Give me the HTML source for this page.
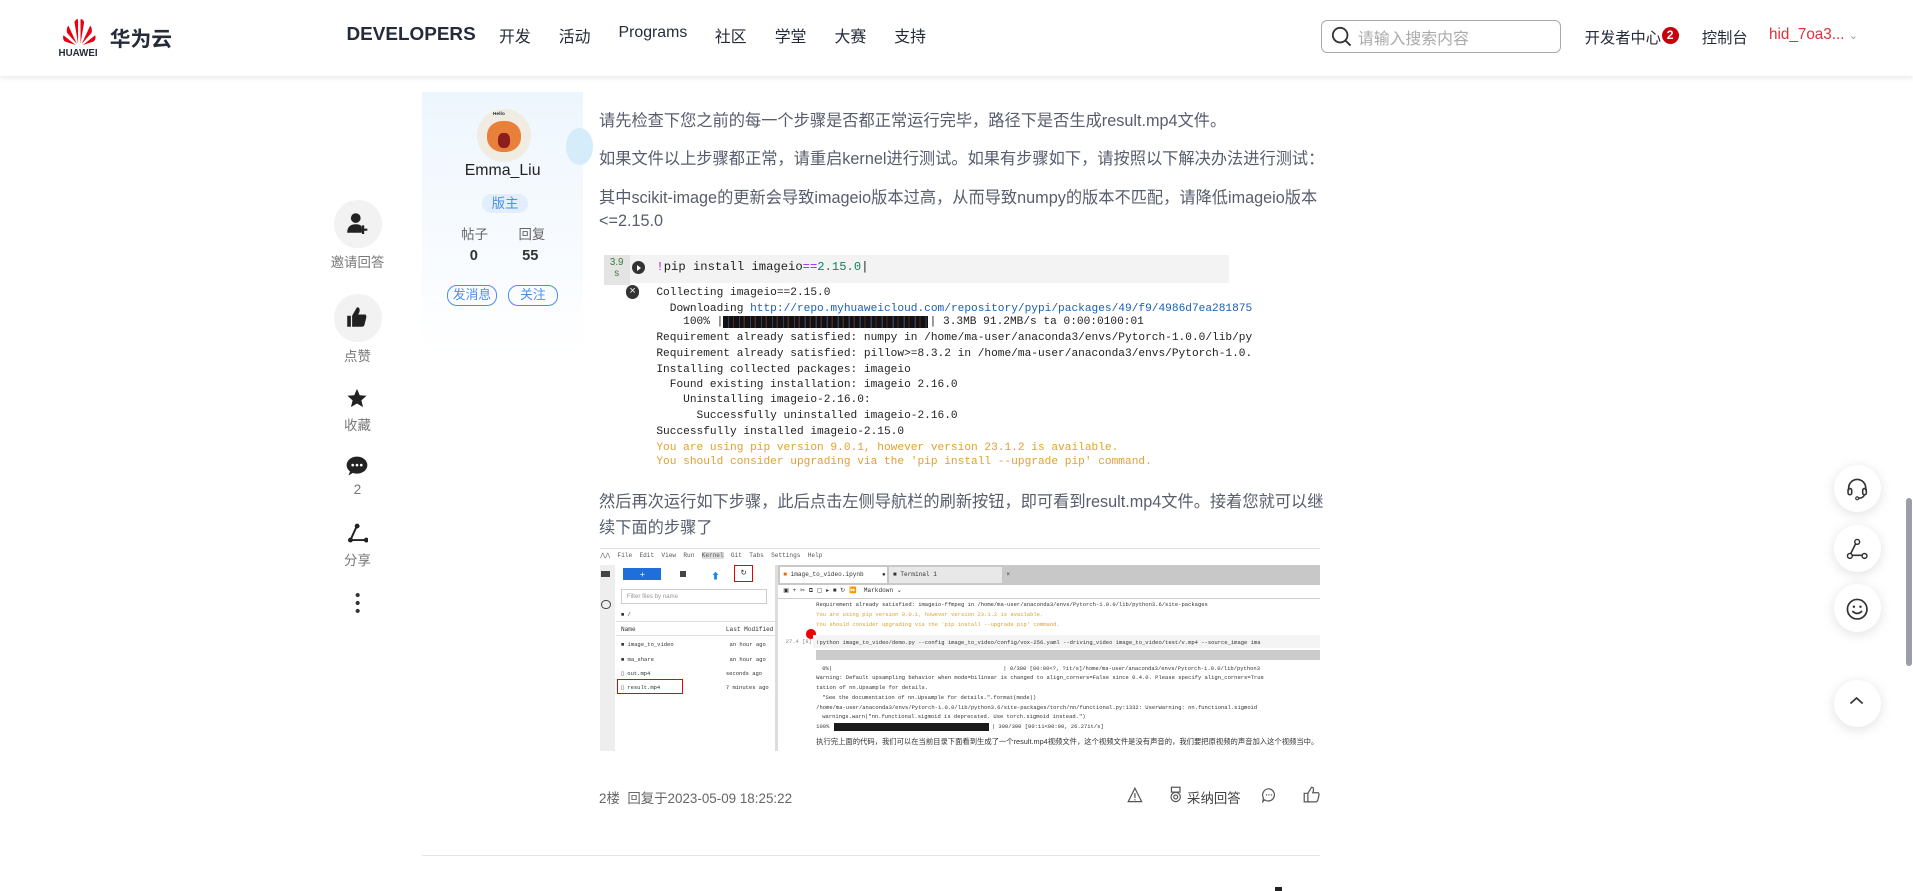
<!DOCTYPE html>
<html><head><meta charset="utf-8">
<style>
html,body{margin:0;padding:0;overflow:hidden;background:#fff}
body{width:1568px;height:730px;zoom:1.22;position:relative;font-family:"Liberation Sans","Noto Sans CJK SC",sans-serif;color:#252b3a}
.a{position:absolute;white-space:nowrap}
.hdr{position:absolute;left:0;top:0;width:1568px;height:62px;background:#fff;box-shadow:0 2px 4px rgba(0,0,0,.08)}
.nav{font-size:13px;color:#252b3a;top:20px}
.rail{text-align:center;width:60px;left:263px;font-size:11px;color:#777}
.circ{position:absolute;left:274px;width:39px;height:39px;border-radius:50%;background:#f2f2f2}
.txt{font-size:13.3px;color:#575d6c;left:491px}
.mono{font-family:"Liberation Mono","DejaVu Sans Mono",monospace;font-size:9.15px;color:#222;left:538px}
.fl{position:absolute;left:1503px;width:39px;height:39px;border-radius:50%;background:#fff;box-shadow:0 2px 10px rgba(0,0,0,.12)}
.s{font-family:"Liberation Mono",monospace;font-size:4.5px;color:#333}
</style></head><body>
<div class="hdr">
 <svg class="a" style="left:50px;top:14px" width="30" height="24" viewBox="0 0 30 24">
  <g fill="#e60012"><path d="M14 22 L11 4 Q13 1 14 2Z"/><path d="M16 22 L19 4 Q17 1 16 2Z"/><path d="M13 22 L6 7 Q4 10 5 13Z"/><path d="M17 22 L24 7 Q26 10 25 13Z"/><path d="M12 23 L2 15 Q1 18 3 20Z"/><path d="M18 23 L28 15 Q29 18 27 20Z"/></g></svg>
 <div class="a" style="left:48px;top:39px;font-size:8px;font-weight:bold">HUAWEI</div>
 <div class="a" style="left:90px;top:18px;font-size:17px;font-weight:bold">华为云</div>
 <div class="a" style="left:284px;top:20px;font-size:15.5px;font-weight:bold">DEVELOPERS</div>
 <div class="a nav" style="left:409px">开发</div>
 <div class="a nav" style="left:458px">活动</div>
 <div class="a nav" style="left:507px">Programs</div>
 <div class="a nav" style="left:586px">社区</div>
 <div class="a nav" style="left:635px">学堂</div>
 <div class="a nav" style="left:684px">大赛</div>
 <div class="a nav" style="left:733px">支持</div>
 <div class="a" style="left:1083px;top:16px;width:195px;height:26px;border:1px solid #aaa;border-radius:5px"></div>
 <svg class="a" style="left:1091px;top:21px" width="18" height="18" viewBox="0 0 18 18"><circle cx="7.5" cy="7.5" r="6" fill="none" stroke="#333" stroke-width="1.5"/><path d="M12 12 L16 16" stroke="#333" stroke-width="1.6"/></svg>
 <div class="a" style="left:1113px;top:21px;font-size:13px;color:#aaa">请输入搜索内容</div>
 <div class="a" style="left:1299px;top:21px;font-size:12.5px">开发者中心</div>
 <div class="a" style="left:1362px;top:22px;width:14px;height:14px;border-radius:50%;background:#c7000b;color:#fff;font-size:10px;text-align:center;line-height:14px;font-weight:bold">2</div>
 <div class="a" style="left:1395px;top:21px;font-size:12.5px">控制台</div>
 <div class="a" style="left:1450px;top:21px;font-size:12.5px;color:#e0303a">hid_7oa3... <span style="color:#999;font-size:9px">⌄</span></div>
</div>

<div class="circ" style="top:164px"></div>
<svg class="a" style="left:284px;top:174px" width="19" height="19" viewBox="0 0 19 19"><circle cx="8" cy="5" r="4" fill="#222"/><path d="M1 17 Q1 10 8 10 Q12 10 13 12 L13 17Z" fill="#222"/><path d="M14 11 V18 M10.5 14.5 H17.5" stroke="#222" stroke-width="1.8"/></svg>
<div class="a rail" style="top:206px">邀请回答</div>
<div class="circ" style="top:241px"></div>
<svg class="a" style="left:284px;top:251px" width="18" height="18" viewBox="0 0 18 18"><path d="M1 8h3v9H1z M5 8 L9 1 Q12 1 11 5 L10 7 H16 Q17 8 16.5 10 L15 16 Q14.5 17 13 17 H5Z" fill="#222"/></svg>
<div class="a rail" style="top:283px">点赞</div>
<svg class="a" style="left:284px;top:317px" width="18" height="18" viewBox="0 0 24 24"><path d="M12 2l3 7 7.5.6-5.7 5 1.8 7.4L12 18l-6.6 4 1.8-7.4-5.7-5L9 9z" fill="#222"/></svg>
<div class="a rail" style="top:339px">收藏</div>
<svg class="a" style="left:284px;top:374px" width="18" height="17" viewBox="0 0 18 17"><ellipse cx="9" cy="7.5" rx="8.5" ry="7" fill="#222"/><path d="M2 16 L4 11 L7 13Z" fill="#222"/><circle cx="5.5" cy="7.5" r="1.1" fill="#fff"/><circle cx="9" cy="7.5" r="1.1" fill="#fff"/><circle cx="12.5" cy="7.5" r="1.1" fill="#fff"/></svg>
<div class="a rail" style="top:395px">2</div>
<svg class="a" style="left:285px;top:429px" width="17" height="17" viewBox="0 0 17 17"><path d="M7 3 L2 14 H15" fill="none" stroke="#222" stroke-width="1.6"/><circle cx="7.5" cy="2.5" r="2" fill="#222"/><circle cx="2" cy="14" r="2" fill="#222"/><circle cx="15" cy="14" r="2" fill="#222"/></svg>
<div class="a rail" style="top:450px">分享</div>
<svg class="a" style="left:290px;top:485px" width="6" height="18"><circle cx="3" cy="2.5" r="1.7" fill="#333"/><circle cx="3" cy="9" r="1.7" fill="#333"/><circle cx="3" cy="15.5" r="1.7" fill="#333"/></svg>

<div class="a" style="left:346px;top:75px;width:132px;height:215px;background:linear-gradient(180deg,#eef6fd 0%,#f7fbff 60%,#fff 100%)"></div>
<div class="a" style="left:464px;top:105px;width:22px;height:30px;border-radius:50%;background:#d5ecfb"></div>
<div class="a" style="left:391px;top:89px;width:44px;height:44px;border-radius:50%;background:#f1ece2;overflow:hidden">
 <div style="position:absolute;left:8px;top:10px;width:28px;height:26px;border-radius:45%;background:#e8803a"></div>
 <div style="position:absolute;left:17px;top:20px;width:10px;height:12px;border-radius:40%;background:#8b1d1d"></div>
 <div style="position:absolute;left:13px;top:3px;font-size:4px;font-weight:bold">Hello</div>
</div>
<div class="a" style="left:346px;width:132px;text-align:center;top:133px;font-size:13px;color:#222">Emma_Liu</div>
<div class="a" style="left:395px;top:159px;width:38px;height:16px;border-radius:8px;background:#e2eefc;color:#4a8ef0;font-size:11px;text-align:center;line-height:16px">版主</div>
<div class="a" style="left:378px;top:183px;font-size:11px;color:#666">帖子</div>
<div class="a" style="left:425px;top:183px;font-size:11px;color:#666">回复</div>
<div class="a" style="left:385px;top:203px;font-size:12px;font-weight:bold;color:#333">0</div>
<div class="a" style="left:428px;top:203px;font-size:12px;font-weight:bold;color:#333">55</div>
<div class="a" style="left:366px;top:234px;width:40px;height:15px;border:1px solid #4a8ef0;border-radius:8px;color:#4a8ef0;font-size:10.5px;text-align:center;line-height:15px">发消息</div>
<div class="a" style="left:416px;top:234px;width:40px;height:15px;border:1px solid #4a8ef0;border-radius:8px;color:#4a8ef0;font-size:10.5px;text-align:center;line-height:15px">关注</div>

<div class="a txt" style="top:88px">请先检查下您之前的每一个步骤是否都正常运行完毕，路径下是否生成result.mp4文件。</div>
<div class="a txt" style="top:119px">如果文件以上步骤都正常，请重启kernel进行测试。如果有步骤如下，请按照以下解决办法进行测试：</div>
<div class="a txt" style="top:151px">其中scikit-image的更新会导致imageio版本过高，从而导致numpy的版本不匹配，请降低imageio版本</div>
<div class="a txt" style="top:174px">&lt;=2.15.0</div>

<div class="a" style="left:495px;top:209px;width:512px;height:23px;background:#f3f3f3"></div>
<div class="a" style="left:495px;top:209px;width:21px;height:23px;background:#e4e4e4;font-size:8px;color:#3a7a3a;text-align:center;line-height:9px;padding-top:2px">3.9<br>s</div>
<div class="a" style="left:518px;top:214px;width:11px;height:11px;border-radius:50%;background:#333"></div>
<div class="a" style="left:522px;top:217px;width:0;height:0;border-left:4px solid #fff;border-top:2.5px solid transparent;border-bottom:2.5px solid transparent"></div>
<div class="a mono" style="top:213px;font-size:10px"><span style="color:#a020f0">!</span>pip install imageio<span style="color:#a020f0">==</span><span style="color:#098658">2.15.0</span>|</div>
<div class="a" style="left:513px;top:234px;width:11px;height:11px;border-radius:50%;background:#333;color:#fff;font-size:9px;text-align:center;line-height:11px">×</div>
<div class="a mono" style="top:235px">Collecting imageio==2.15.0</div>
<div class="a mono" style="top:248px">&nbsp;&nbsp;Downloading <span style="color:#1a5fb4">http://repo.myhuaweicloud.com/repository/pypi/packages/49/f9/4986d7ea281875</span></div>
<div class="a mono" style="top:259px">&nbsp;&nbsp;&nbsp;&nbsp;100% |</div>
<div class="a" style="left:593px;top:259px;width:168px;height:10px;background:repeating-linear-gradient(90deg,#111 0 4px,#3a3a5a 4px 5px,#111 5px 8px,#4a2a2a 8px 9px)"></div>
<div class="a mono" style="left:762px;top:259px">| 3.3MB 91.2MB/s ta 0:00:0100:01</div>
<div class="a mono" style="top:272px">Requirement already satisfied: numpy in /home/ma-user/anaconda3/envs/Pytorch-1.0.0/lib/py</div>
<div class="a mono" style="top:285px">Requirement already satisfied: pillow&gt;=8.3.2 in /home/ma-user/anaconda3/envs/Pytorch-1.0.</div>
<div class="a mono" style="top:298px">Installing collected packages: imageio</div>
<div class="a mono" style="top:311px">&nbsp;&nbsp;Found existing installation: imageio 2.16.0</div>
<div class="a mono" style="top:323px">&nbsp;&nbsp;&nbsp;&nbsp;Uninstalling imageio-2.16.0:</div>
<div class="a mono" style="top:336px">&nbsp;&nbsp;&nbsp;&nbsp;&nbsp;&nbsp;Successfully uninstalled imageio-2.16.0</div>
<div class="a mono" style="top:349px">Successfully installed imageio-2.15.0</div>
<div class="a mono" style="top:362px;color:#e0a030">You are using pip version 9.0.1, however version 23.1.2 is available.</div>
<div class="a mono" style="top:374px;color:#e0a030">You should consider upgrading via the 'pip install --upgrade pip' command.</div>

<div class="a txt" style="top:400px">然后再次运行如下步骤，此后点击左侧导航栏的刷新按钮，即可看到result.mp4文件。接着您就可以继</div>
<div class="a txt" style="top:421px">续下面的步骤了</div>

<div class="a" style="left:492px;top:449px;width:590px;height:166px;background:#fff;border-top:1px solid #ddd;overflow:hidden">
 <div class="a s" style="left:0;top:3px;font-size:5px;color:#555">⋀⋀&nbsp; File&nbsp; Edit&nbsp; View&nbsp; Run&nbsp; <span style="background:#ddd">Kernel</span>&nbsp; Git&nbsp; Tabs&nbsp; Settings&nbsp; Help</div>
 <div class="a" style="left:0;top:13px;width:12px;height:153px;background:#eee"></div>
 <div class="a" style="left:1px;top:18px;width:7px;height:5px;background:#444"></div>
 <div class="a" style="left:1px;top:42px;width:6px;height:6px;border:1.5px solid #444;border-radius:50%"></div>
 <div class="a" style="left:19px;top:16px;width:31px;height:10px;background:#1e6fd9;color:#fff;font-size:7px;text-align:center;line-height:10px">+</div>
 <div class="a" style="left:65px;top:18px;width:5px;height:5px;background:#444"></div>
 <div class="a" style="left:91px;top:17px;color:#1e88e5;font-size:7px">⬆</div>
 <div class="a" style="left:110px;top:13px;width:15px;height:14px;border:1.5px solid #e00;box-sizing:border-box;font-size:6px;text-align:center;line-height:11px">↻</div>
 <div class="a" style="left:17px;top:33px;width:120px;height:12px;border:1px solid #ccc;font-size:5px;color:#999;line-height:12px;padding-left:4px;box-sizing:border-box">Filter files by name</div>
 <div class="a s" style="left:17px;top:51px">■ /</div>
 <div class="a" style="left:13px;top:59px;width:130px;border-top:1px solid #ddd"></div>
 <div class="a s" style="left:17px;top:63px;font-size:5px">Name</div>
 <div class="a s" style="left:103px;top:63px;font-size:5px">Last Modified</div>
 <div class="a" style="left:13px;top:71px;width:130px;border-top:1px solid #ddd"></div>
 <div class="a s" style="left:17px;top:76px">■ image_to_video</div><div class="a s" style="left:106px;top:76px">an hour ago</div>
 <div class="a s" style="left:17px;top:88px">■ ma_share</div><div class="a s" style="left:106px;top:88px">an hour ago</div>
 <div class="a s" style="left:17px;top:99px">▯ out.mp4</div><div class="a s" style="left:103px;top:99px">seconds ago</div>
 <div class="a s" style="left:17px;top:111px">▯ result.mp4</div><div class="a s" style="left:103px;top:111px">7 minutes ago</div>
 <div class="a" style="left:14px;top:107px;width:54px;height:12px;border:1.5px solid #e00;box-sizing:border-box"></div>
 <div class="a" style="left:143px;top:13px;width:3px;height:153px;background:#ddd"></div>
 <div class="a" style="left:146px;top:13px;width:444px;height:17px;background:#c8c8c8"></div>
 <div class="a s" style="left:147px;top:15px;width:88px;height:13px;background:#fff;font-size:5px;line-height:13px">&nbsp;<span style="color:#e60">■</span> image_to_video.ipynb &nbsp;&nbsp;&nbsp;&nbsp;●</div>
 <div class="a s" style="left:237px;top:15px;width:92px;height:13px;background:#e8e8e8;font-size:5px;line-height:13px">&nbsp;■ Terminal 1 &nbsp;&nbsp;&nbsp;&nbsp;&nbsp;&nbsp;&nbsp;&nbsp;&nbsp;&nbsp;&nbsp;&nbsp;&nbsp;&nbsp;&nbsp;&nbsp;&nbsp;&nbsp;×</div>
 <div class="a s" style="left:150px;top:31px;font-size:5px">▣ + ✂ ⧉ ▢ ▸ ■ ↻ ⏩ &nbsp;Markdown ⌄</div>
 <div class="a" style="left:146px;top:40px;width:444px;border-top:1px solid #ccc"></div>
 <div class="a s" style="left:177px;top:43px">Requirement already satisfied: imageio-ffmpeg in /home/ma-user/anaconda3/envs/Pytorch-1.0.0/lib/python3.6/site-packages</div>
 <div class="a s" style="left:177px;top:51px;color:#e0a030">You are using pip version 9.0.1, however version 23.1.2 is available.</div>
 <div class="a s" style="left:177px;top:59px;color:#e0a030">You should consider upgrading via the 'pip install --upgrade pip' command.</div>
 <div class="a" style="left:169px;top:66px;width:8px;height:8px;border-radius:50%;background:#e00"></div>
 <div class="a s" style="left:152px;top:73px;color:#888">27.4 [8]</div>
 <div class="a" style="left:174px;top:71px;width:416px;height:10px;background:#f4f4f4"></div>
 <div class="a s" style="left:177px;top:74px">!python image_to_video/demo.py --config image_to_video/config/vox-256.yaml --driving_video image_to_video/test/v.mp4 --source_image ima</div>
 <div class="a" style="left:177px;top:83px;width:413px;height:8px;background:#ccc"></div>
 <div class="a s" style="left:182px;top:95px">0%| &nbsp;&nbsp;&nbsp;&nbsp;&nbsp;&nbsp;&nbsp;&nbsp;&nbsp;&nbsp;&nbsp;&nbsp;&nbsp;&nbsp;&nbsp;&nbsp;&nbsp;&nbsp;&nbsp;&nbsp;&nbsp;&nbsp;&nbsp;&nbsp;&nbsp;&nbsp;&nbsp;&nbsp;&nbsp;&nbsp;&nbsp;&nbsp;&nbsp;&nbsp;&nbsp;&nbsp;&nbsp;&nbsp;&nbsp;&nbsp;&nbsp;&nbsp;&nbsp;&nbsp;&nbsp;&nbsp;&nbsp;&nbsp;&nbsp;&nbsp;&nbsp;| 0/300 [00:00&lt;?, ?it/s]/home/ma-user/anaconda3/envs/Pytorch-1.0.0/lib/python3</div>
 <div class="a s" style="left:177px;top:103px">Warning: Default upsampling behavior when mode=bilinear is changed to align_corners=False since 0.4.0. Please specify align_corners=True</div>
 <div class="a s" style="left:177px;top:111px">tation of nn.Upsample for details.</div>
 <div class="a s" style="left:182px;top:119px">"See the documentation of nn.Upsample for details.".format(mode))</div>
 <div class="a s" style="left:177px;top:127px">/home/ma-user/anaconda3/envs/Pytorch-1.0.0/lib/python3.6/site-packages/torch/nn/functional.py:1332: UserWarning: nn.functional.sigmoid</div>
 <div class="a s" style="left:182px;top:135px">warnings.warn("nn.functional.sigmoid is deprecated. Use torch.sigmoid instead.")</div>
 <div class="a s" style="left:177px;top:143px">100%</div>
 <div class="a" style="left:192px;top:143px;width:127px;height:6px;background:#1a1a1a"></div>
 <div class="a s" style="left:321px;top:143px">| 300/300 [00:11&lt;00:00, 26.27it/s]</div>
 <div class="a" style="left:177px;top:154px;font-size:6px;color:#333">执行完上面的代码，我们可以在当前目录下面看到生成了一个result.mp4视频文件，这个视频文件是没有声音的，我们要把原视频的声音加入这个视频当中。</div>
</div>

<div class="a" style="left:491px;top:645px;font-size:11px;color:#666">2楼&nbsp; 回复于2023-05-09 18:25:22</div>
<svg class="a" style="left:924px;top:645px" width="13" height="13" viewBox="0 0 13 13"><path d="M6.5 1 L12 12 H1Z M6.5 5 V9 M6.5 10 V11" fill="none" stroke="#555"/></svg>
<svg class="a" style="left:958px;top:644px" width="11" height="14" viewBox="0 0 11 14"><rect x="2" y="1" width="7" height="4" fill="none" stroke="#555"/><circle cx="5.5" cy="9" r="3.8" fill="none" stroke="#555"/><circle cx="5.5" cy="9" r="1.6" fill="none" stroke="#555"/></svg>
<div class="a" style="left:973px;top:645px;font-size:11px;color:#444">采纳回答</div>
<svg class="a" style="left:1034px;top:645px" width="13" height="13" viewBox="0 0 13 13"><path d="M6.5 1.5 A5 5 0 1 1 3 10.5 L1.5 12 L2 9 A5 5 0 0 1 6.5 1.5Z" fill="none" stroke="#555"/><circle cx="4.5" cy="6.5" r=".6" fill="#555"/><circle cx="6.5" cy="6.5" r=".6" fill="#555"/><circle cx="8.5" cy="6.5" r=".6" fill="#555"/></svg>
<svg class="a" style="left:1068px;top:644px" width="14" height="14" viewBox="0 0 14 14"><path d="M1 6h3v7H1z M4 6 L7 1 Q9 1 8.5 4 L8 5.5 H12.5 Q13.5 6.5 13 8 L12 12 Q11.5 13 10.5 13 H4" fill="none" stroke="#555"/></svg>
<div class="a" style="left:346px;top:701px;width:736px;border-top:1px solid #e5e5e5"></div>
<div class="a" style="left:1045px;top:727px;width:6px;height:3px;background:#222"></div>

<div class="fl" style="top:381px"></div>
<svg class="a" style="left:1512px;top:391px" width="20" height="20" viewBox="0 0 20 20"><path d="M3 11 V9 A7 7 0 0 1 17 9 V11" fill="none" stroke="#333" stroke-width="1.4"/><rect x="2.5" y="9.5" width="3" height="5" rx="1.3" fill="none" stroke="#333" stroke-width="1.3"/><rect x="14.5" y="9.5" width="3" height="5" rx="1.3" fill="none" stroke="#333" stroke-width="1.3"/><path d="M16 14.5 Q15 17.5 11 17.5" fill="none" stroke="#333" stroke-width="1.3"/><circle cx="10" cy="17.5" r="1.2" fill="none" stroke="#333"/></svg>
<div class="fl" style="top:430px"></div>
<svg class="a" style="left:1512px;top:440px" width="20" height="20" viewBox="0 0 20 20"><path d="M9 5 L4 15 H14" fill="none" stroke="#333" stroke-width="1.3"/><circle cx="10" cy="4" r="2" fill="#fff" stroke="#333" stroke-width="1.2"/><circle cx="4" cy="15.5" r="2" fill="#fff" stroke="#333" stroke-width="1.2"/><circle cx="16" cy="15.5" r="2" fill="#fff" stroke="#333" stroke-width="1.2"/></svg>
<div class="fl" style="top:479px"></div>
<svg class="a" style="left:1512px;top:489px" width="20" height="20" viewBox="0 0 20 20"><circle cx="10" cy="10" r="8" fill="none" stroke="#333" stroke-width="1.4"/><circle cx="7.3" cy="8" r="1" fill="#333"/><circle cx="12.7" cy="8" r="1" fill="#333"/><path d="M6 11.5 Q10 15.5 14 11.5" fill="none" stroke="#333" stroke-width="1.4"/></svg>
<div class="fl" style="top:557px"></div>
<svg class="a" style="left:1515px;top:570px" width="14" height="10" viewBox="0 0 14 10"><path d="M2 7 L7 2.5 L12 7" fill="none" stroke="#333" stroke-width="1.4"/></svg>

<div class="a" style="left:1562px;top:408px;width:5px;height:138px;border-radius:3px;background:#9a9ea8"></div>
</body></html>
